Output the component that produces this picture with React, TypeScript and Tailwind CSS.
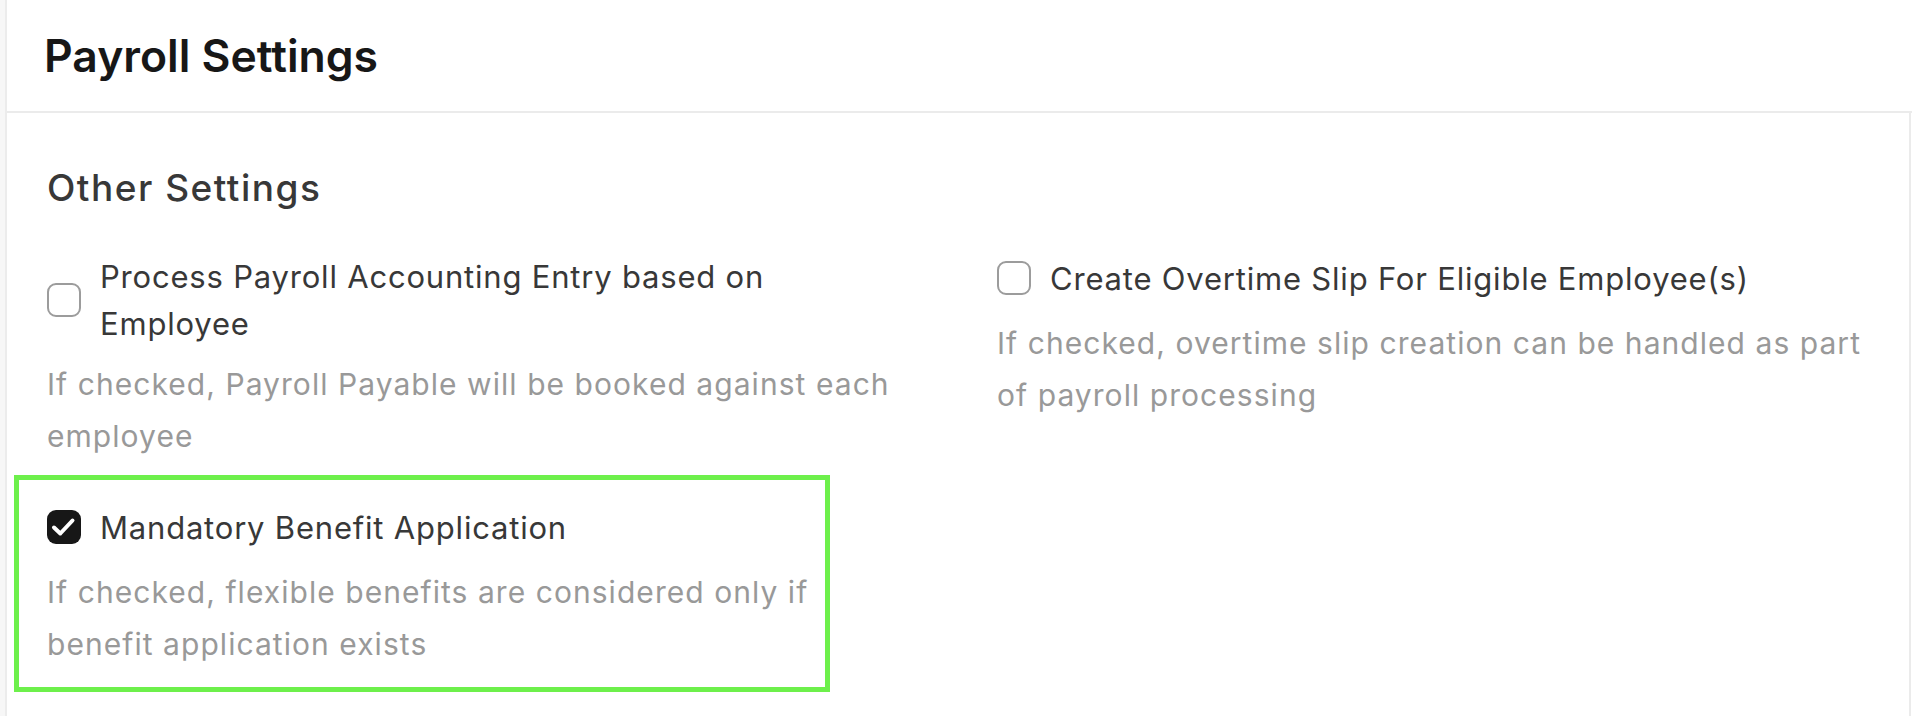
import React from "react";

type Field = {
  label: string;
  description: string;
  checked?: boolean;
  highlight?: boolean;
};

const left: Field[] = [
  {
    label: "Process Payroll Accounting Entry based on Employee",
    description: "If checked, Payroll Payable will be booked against each employee",
  },
  {
    label: "Mandatory Benefit Application",
    description: "If checked, flexible benefits are considered only if benefit application exists",
    checked: true,
    highlight: true,
  },
];

const right: Field[] = [
  {
    label: "Create Overtime Slip For Eligible Employee(s)",
    description: "If checked, overtime slip creation can be handled as part of payroll processing",
  },
];

function Checkbox({ checked }: { checked?: boolean }) {
  if (checked) {
    return (
      <span className="flex h-[34px] w-[34px] shrink-0 items-center justify-center rounded-[9px] bg-[#171717]">
        <svg viewBox="0 0 34 34" className="h-[34px] w-[34px]" fill="none">
          <path d="M7 17.5l6.3 6L25.5 10.5" stroke="white" strokeWidth={4} strokeLinecap="round" strokeLinejoin="round" />
        </svg>
      </span>
    );
  }
  return <span className="h-[34px] w-[34px] shrink-0 rounded-[9px] border-2 border-[#9c9c9c] bg-white" />;
}

function SettingField({ field }: { field: Field }) {
  return (
    <div className="relative">
      {field.highlight && (
        <span className="pointer-events-none absolute -left-[33px] -top-[24px] h-[217px] w-[816px] border-[5px] border-[#6df04b]" />
      )}
      <label className="flex min-h-[56px] items-center gap-[19px]">
        <Checkbox checked={field.checked} />
        <span className="max-w-[790px] text-[31px] leading-[47px] tracking-[0.8px] text-[#383838]">{field.label}</span>
      </label>
      <p className="mt-[11px] text-[30px] leading-[52px] tracking-[1.05px] text-[#999999]">{field.description}</p>
    </div>
  );
}

export default function App() {
  return (
    <div className="flex h-[716px] overflow-hidden bg-white font-['Inter',sans-serif]">
      <div className="w-[7px] shrink-0 border-r-2 border-[#ececec] bg-[#f7f7f7]" />
      <div className="flex min-w-0 flex-1 flex-col">
        <header className="flex h-[113px] shrink-0 items-center border-b-2 border-[#ebebeb] px-[37px]">
          <h1 className="text-[44.5px] font-semibold leading-[54px] text-[#171717]">Payroll Settings</h1>
        </header>
        <div className="mr-[1px] flex-1 border-r-2 border-[#ebebeb] pl-[40px] pr-[20px] pt-[50px]">
          <h2 className="text-[37px] font-medium leading-[50px] tracking-[1.5px] text-[#383838]">Other Settings</h2>
          <div className="mt-[40px] grid grid-cols-[860px_1fr] gap-x-[90px]">
            <div className="flex flex-col gap-[37px]">
              {left.map((f) => (
                <SettingField key={f.label} field={f} />
              ))}
            </div>
            {/* single-line label sits a touch higher than the wrapped one */}
            <div className="-mt-[3px] flex flex-col gap-[37px]">
              {right.map((f) => (
                <SettingField key={f.label} field={f} />
              ))}
            </div>
          </div>
        </div>
      </div>
    </div>
  );
}
